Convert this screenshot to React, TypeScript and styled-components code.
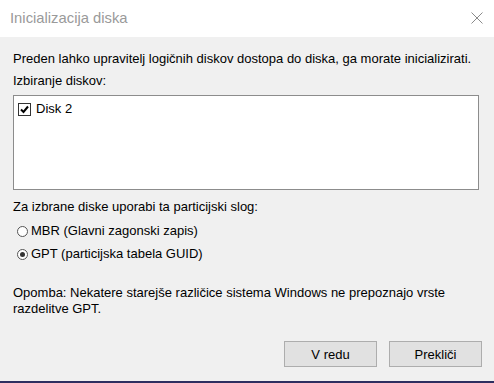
import styled, { createGlobalStyle } from 'styled-components';

const GlobalStyle = createGlobalStyle`
  html, body {
    margin: 0;
    padding: 0;
    background: #f0f0f0;
  }
  body {
    font-family: "Liberation Sans", Arial, sans-serif;
  }
`;

export default function App() {
  return (
    <>
      <GlobalStyle />
      <Dialog>
        <TitleBar>
          <Title>Inicializacija diska</Title>
          <CloseButton aria-label="Zapri">
            <svg width="12" height="12" viewBox="0 0 12 12">
              <path d="M0.5 0.5 L11.5 11.5 M11.5 0.5 L0.5 11.5" stroke="#8a8a8a" strokeWidth="1" fill="none" />
            </svg>
          </CloseButton>
        </TitleBar>

        <Body>
          <Text>Preden lahko upravitelj logičnih diskov dostopa do diska, ga morate inicializirati.</Text>
          <Label>Izbiranje diskov:</Label>
          <ListBox>
            <ListItem>
              <CheckBox>
                <svg width="9" height="9" viewBox="0 0 9 9">
                  <path d="M1 4.5 L3.5 7 L8 1.5" stroke="#000" strokeWidth="2" fill="none" />
                </svg>
              </CheckBox>
              Disk 2
            </ListItem>
          </ListBox>

          <SectionLabel>Za izbrane diske uporabi ta particijski slog:</SectionLabel>
          <RadioGroup>
            <RadioRow>
              <Radio />
              MBR (Glavni zagonski zapis)
            </RadioRow>
            <RadioRow>
              <Radio $checked />
              GPT (particijska tabela GUID)
            </RadioRow>
          </RadioGroup>

          <Note>
            Opomba: Nekatere starejše različice sistema Windows ne prepoznajo vrste
            <br />
            razdelitve GPT.
          </Note>

          <ButtonRow>
            <Button>V redu</Button>
            <Button>Prekliči</Button>
          </ButtonRow>
        </Body>
      </Dialog>
    </>
  );
}

const Dialog = styled.div`
  width: 494px;
  height: 383px;
  display: flex;
  flex-direction: column;
  background: #f0f0f0;
  border-bottom: 2px solid #2e2e60;
  box-sizing: border-box;
  color: #000;
  font-size: 13px;
`;

const TitleBar = styled.div`
  height: 37px;
  flex: none;
  background: #fff;
  display: flex;
  align-items: center;
  justify-content: space-between;
  padding: 0 11px 2px 10px;
  box-sizing: border-box;
`;

const Title = styled.span`
  font-size: 14.8px;
  color: #9a9a9a;
`;

const CloseButton = styled.div`
  width: 12px;
  height: 12px;
  display: flex;
`;

const Body = styled.div`
  flex: 1;
  display: flex;
  flex-direction: column;
  padding: 14px 15px 0 13px;
`;

const Text = styled.div`
  line-height: 16px;
`;

const Label = styled.div`
  line-height: 16px;
  margin-top: 6px;
`;

const ListBox = styled.div`
  margin-top: 6px;
  height: 95px;
  background: #fff;
  border: 1px solid #8c8c8c;
  box-sizing: border-box;
  padding: 6px 4px;
`;

const ListItem = styled.div`
  display: flex;
  align-items: center;
  gap: 5px;
  line-height: 14px;
`;

const CheckBox = styled.span`
  width: 13px;
  height: 13px;
  box-sizing: border-box;
  border: 1px solid #333;
  background: #fff;
  display: flex;
  align-items: center;
  justify-content: center;
`;

const SectionLabel = styled.div`
  line-height: 16px;
  margin-top: 9px;
`;

const RadioGroup = styled.div`
  display: flex;
  flex-direction: column;
  gap: 7px;
  margin-top: 8px;
  padding-left: 4px;
`;

const RadioRow = styled.div`
  display: flex;
  align-items: center;
  gap: 3px;
  line-height: 16px;
`;

const Radio = styled.span<{ $checked?: boolean }>`
  width: 11px;
  height: 11px;
  border-radius: 50%;
  border: 1px solid #555;
  box-sizing: border-box;
  background: #fff;
  position: relative;

  &::after {
    content: '';
    display: ${p => (p.$checked ? 'block' : 'none')};
    position: absolute;
    inset: 2px;
    border-radius: 50%;
    background: #333;
  }
`;

const Note = styled.div`
  margin-top: 23px;
  line-height: 16px;
`;

const ButtonRow = styled.div`
  display: flex;
  justify-content: flex-end;
  gap: 12px;
  margin-top: 24px;
  margin-right: -3px;
`;

const Button = styled.button`
  width: 93px;
  height: 26px;
  background: #e1e1e1;
  border: 1px solid #adadad;
  font-family: "Liberation Sans", Arial, sans-serif;
  font-size: 13px;
  color: #000;
  padding: 0;
`;
